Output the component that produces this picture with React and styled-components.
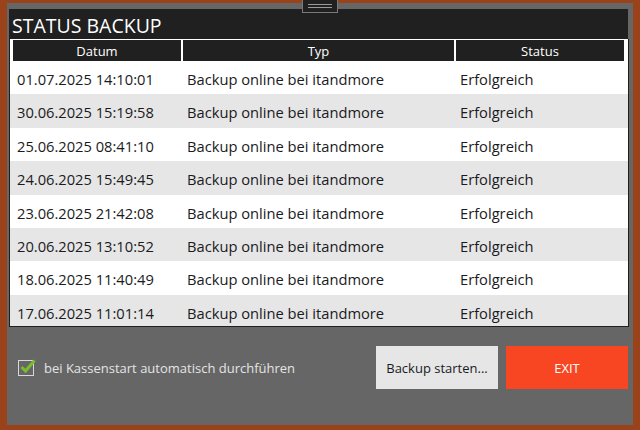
import React from 'react'
import styled, { createGlobalStyle } from 'styled-components'

const GlobalStyle = createGlobalStyle`
  html, body {
    margin: 0;
    padding: 0;
    background: #9a431a;
    font-family: "Open Sans", "Noto Sans", sans-serif;
  }
`

const Frame = styled.div`
  width: 640px;
  height: 430px;
  box-sizing: border-box;
  padding: 3px 7px 5px 7px;
  position: relative;
`

const Handle = styled.div`
  position: absolute;
  top: 0;
  left: 302px;
  width: 34px;
  height: 12px;
  background: #202020;
  border: 1px solid #7a7a7a;
  border-top: none;
  display: flex;
  flex-direction: column;
  align-items: center;
  justify-content: center;
  gap: 2px;
  & span {
    display: block;
    width: 24px;
    height: 1px;
    background: #9a9a9a;
  }
`

const Panel = styled.div`
  height: 100%;
  background: #666666;
  padding: 6px 4px 0 2px;
  box-sizing: border-box;
  display: flex;
  flex-direction: column;
`

const Title = styled.h1`
  margin: 0;
  height: 30px;
  width: 619px;
  background: #202020;
  color: #ffffff;
  font-size: 19.5px;
  font-weight: 400;
  line-height: 34px;
  padding-left: 3px;
  box-sizing: border-box;
  white-space: nowrap;
`

const Table = styled.div`
  width: 620px;
  height: 288px;
  box-sizing: border-box;
  background: #ffffff;
  border: 1px solid #202020;
  border-top: none;
  padding-top: 1px;
  overflow: hidden;
`

const Columns = styled.div`
  display: grid;
  grid-template-columns: 168px 271px 168px;
  column-gap: 2px;
  padding-left: 3px;
  background: ${p => (p.$alt ? '#e6e6e6' : '#ffffff')};
`

const HeadCell = styled.div`
  height: 21px;
  background: #202020;
  color: #ffffff;
  font-size: 13px;
  line-height: 22px;
  text-align: center;
`

const Cell = styled.div`
  height: 33.4px;
  line-height: 37px;
  padding-left: 4px;
  color: #1a1a22;
  font-size: 14.7px;
  white-space: nowrap;
  overflow: hidden;
`

const Footer = styled.div`
  flex: 1;
  display: flex;
  align-items: flex-start;
  padding: 19px 1px 0 9px;
`

const CheckLabel = styled.label`
  display: flex;
  align-items: center;
  gap: 10px;
  height: 43px;
  color: #e4e4e4;
  font-size: 13px;
  flex: 1;
`

const Box = styled.span`
  width: 14px;
  height: 14px;
  border: 1px solid #d8d8d8;
  position: relative;
  & svg {
    position: absolute;
    left: 1px;
    top: -3px;
  }
`

const Button = styled.button`
  width: 122px;
  height: 43px;
  border: none;
  margin-left: 8px;
  font-family: inherit;
  font-size: 13px;
  background: ${p => (p.$primary ? '#f84622' : '#e6e6e6')};
  color: ${p => (p.$primary ? '#ffffff' : '#1a1a22')};
`

const rows = [
  '01.07.2025 14:10:01',
  '30.06.2025 15:19:58',
  '25.06.2025 08:41:10',
  '24.06.2025 15:49:45',
  '23.06.2025 21:42:08',
  '20.06.2025 13:10:52',
  '18.06.2025 11:40:49',
  '17.06.2025 11:01:14',
]

export default function App() {
  return (
    <>
      <GlobalStyle />
      <Frame>
        <Handle>
          <span />
          <span />
        </Handle>
        <Panel>
          <Title>STATUS BACKUP</Title>
          <Table>
            <Columns>
              <HeadCell>Datum</HeadCell>
              <HeadCell>Typ</HeadCell>
              <HeadCell>Status</HeadCell>
            </Columns>
            {rows.map((d, i) => (
              <Columns key={d} $alt={i % 2 === 1}>
                <Cell>{d}</Cell>
                <Cell>Backup online bei itandmore</Cell>
                <Cell>Erfolgreich</Cell>
              </Columns>
            ))}
          </Table>
          <Footer>
            <CheckLabel>
              <Box>
                <svg width="16" height="16" viewBox="0 0 16 16">
                  <path d="M1.5 9 L5.5 13 L14.5 2.5" fill="none" stroke="#7cbb2c" strokeWidth="3" />
                </svg>
              </Box>
              bei Kassenstart automatisch durchführen
            </CheckLabel>
            <Button>Backup starten...</Button>
            <Button $primary>EXIT</Button>
          </Footer>
        </Panel>
      </Frame>
    </>
  )
}
